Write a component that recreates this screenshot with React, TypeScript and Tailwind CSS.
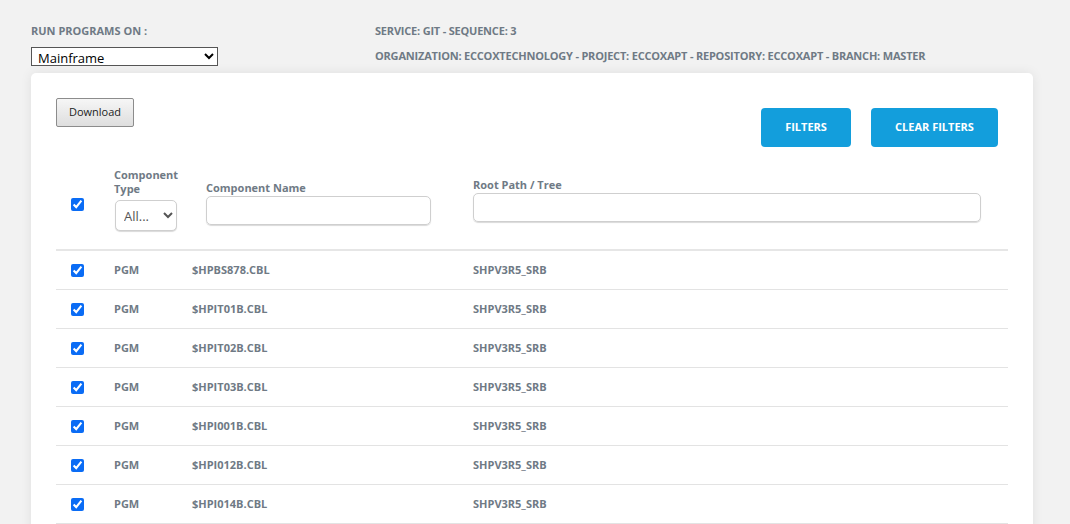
import { useState } from "react";

const rows = [
  { type: "PGM", name: "$HPBS878.CBL", root: "SHPV3R5_SRB" },
  { type: "PGM", name: "$HPIT01B.CBL", root: "SHPV3R5_SRB" },
  { type: "PGM", name: "$HPIT02B.CBL", root: "SHPV3R5_SRB" },
  { type: "PGM", name: "$HPIT03B.CBL", root: "SHPV3R5_SRB" },
  { type: "PGM", name: "$HPI001B.CBL", root: "SHPV3R5_SRB" },
  { type: "PGM", name: "$HPI012B.CBL", root: "SHPV3R5_SRB" },
  { type: "PGM", name: "$HPI014B.CBL", root: "SHPV3R5_SRB" },
];

function Check({ checked, onChange }: { checked: boolean; onChange: () => void }) {
  return (
    <input
      type="checkbox"
      checked={checked}
      onChange={onChange}
      className="block h-[13px] w-[13px] accent-[#0a6cf5]"
    />
  );
}

export default function App() {
  const [allChecked, setAllChecked] = useState(true);
  const [checked, setChecked] = useState<boolean[]>(rows.map(() => true));

  return (
    <div className="h-[524px] overflow-hidden bg-[#f2f2f2] font-['Open_Sans',sans-serif] text-[#6f7a85]">
      {/* Top info */}
      <div className="flex px-[31px] pt-[23px]">
        <div className="w-[344px]">
          <p className="text-[11px] font-bold leading-[16px]">RUN PROGRAMS ON :</p>
          <select className="mt-[8px] block h-[19px] w-[187px] border border-[#555] bg-white px-[2px] py-0 text-[13px] leading-[15px] text-black">
            <option>Mainframe</option>
          </select>
        </div>
        <div className="text-[11px] font-bold leading-[16px] tracking-[-0.2px]">
          <p>SERVICE: GIT - SEQUENCE: 3</p>
          <p className="mt-[9px]">
            ORGANIZATION: ECCOXTECHNOLOGY - PROJECT: ECCOXAPT - REPOSITORY: ECCOXAPT - BRANCH: MASTER
          </p>
        </div>
      </div>

      {/* Card */}
      <div className="mx-[31px] mt-[7px] w-[1002px] rounded-[5px] bg-white px-[25px] pb-[30px] pt-[25px] shadow-[0_0_12px_rgba(0,0,0,0.08)]">
        <div className="flex items-start justify-between">
          <button className="h-[29px] w-[78px] rounded-[2px] border border-[#8c8c8c] bg-gradient-to-b from-[#f6f6f6] to-[#dedede] text-[11px] text-[#222]">
            Download
          </button>
          <div className="mr-[10px] mt-[10px] flex gap-[20px]">
            <button className="h-[39px] w-[90px] rounded-[4px] bg-[#139edc] text-[11px] font-bold text-white">
              FILTERS
            </button>
            <button className="h-[39px] w-[127px] rounded-[4px] bg-[#139edc] text-[11px] font-bold text-white">
              CLEAR FILTERS
            </button>
          </div>
        </div>

        {/* Filter header */}
        <div className="mt-[21px] flex h-[83px] items-start border-b-2 border-[#e6e6e6]">
          <div className="w-[58px] pl-[15px] pt-[30px]">
            <Check checked={allChecked} onChange={() => setAllChecked(!allChecked)} />
          </div>
          <div className="w-[92px]">
            <p className="text-[11px] font-bold leading-[14px]">
              Component
              <br />
              Type
            </p>
            <select className="mt-[4px] ml-[1px] block h-[31px] w-[62px] rounded-[5px] border border-[#cfcfcf] bg-white px-[4px] text-[13px] text-[#555] shadow-[0_1px_1px_rgba(0,0,0,0.15)]">
              <option>All...</option>
            </select>
          </div>
          <div className="w-[267px] pt-[13px]">
            <p className="text-[11px] font-bold leading-[14px]">Component Name</p>
            <input className="mt-[1px] block h-[29px] w-[225px] rounded-[5px] border border-[#cfcfcf] shadow-[0_1px_1px_rgba(0,0,0,0.15)]" />
          </div>
          <div className="pt-[10px]">
            <p className="text-[11px] font-bold leading-[14px]">Root Path / Tree</p>
            <input className="mt-[1px] block h-[29px] w-[508px] rounded-[5px] border border-[#cfcfcf] shadow-[0_1px_1px_rgba(0,0,0,0.15)]" />
          </div>
        </div>

        {/* Rows */}
        {rows.map((r, i) => (
          <div key={i} className="flex h-[39px] items-center border-b border-[#e3e3e3] text-[11px] font-bold">
            <div className="flex w-[58px] items-center pl-[15px]">
              <Check
                checked={checked[i]}
                onChange={() => setChecked(checked.map((c, j) => (j === i ? !c : c)))}
              />
            </div>
            <div className="w-[78px]">{r.type}</div>
            <div className="w-[281px]">{r.name}</div>
            <div>{r.root}</div>
          </div>
        ))}
      </div>
    </div>
  );
}
